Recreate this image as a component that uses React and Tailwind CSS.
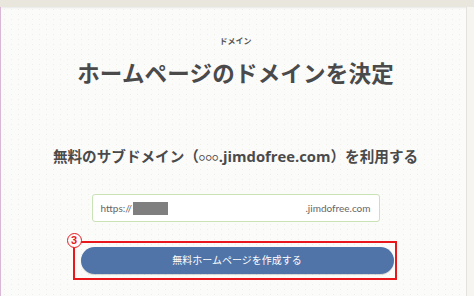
export default function App() {
  const jp = { fontFamily: 'Lato, "Noto Sans CJK JP", sans-serif' }

  return (
    <div
      className="w-[474px] h-[296px] overflow-hidden flex flex-col bg-[#fbfbfa] text-[#4a4a4a]"
      style={jp}
    >
      {/* top strip */}
      <div className="h-[7px] shrink-0 bg-[#e9e6de] shadow-[0_1px_2px_rgba(0,0,0,0.08)]" />

      <div className="flex flex-1 min-h-0">
        <div className="w-px shrink-0 bg-[#d8b8d6]" />

        <main className="flex-1 flex flex-col items-center pl-[4px] bg-[radial-gradient(#f0eee9_0.6px,transparent_0.8px)] bg-[size:7px_5px]">
          <p className="mt-[28px] text-[8px] leading-[12px] font-bold text-[#555]">ドメイン</p>
          <h1 className="mt-[12px] text-[22.5px] leading-[30px] font-bold tracking-[0.2px] text-[#4a4a4a]">
            ホームページのドメインを決定
          </h1>

          <h2 className="mt-[56px] text-[14.6px] leading-[22px] font-bold text-[#4a4a4a]">
            無料のサブドメイン（<span className="text-[10px] align-[1px] font-normal">○○○</span>
            <span className="font-['Open_Sans',sans-serif] text-[14.8px]">.jimdofree.com</span>）を利用する
          </h2>

          <div className="mt-[26px] w-[288px] h-[28px] flex items-center px-[8px] rounded-[3px] border border-[#c9e2b6] bg-white text-[10px] text-[#666]">
            <span>https://</span>
            <span className="ml-[1px] w-[35px] h-[13px] bg-[#7f7f7f]" />
            <span className="ml-auto">.jimdofree.com</span>
          </div>

          <div className="relative mt-[19px] ml-[-2px] w-[324px] h-[39px] border-2 border-[#e8181d] flex items-center pl-[6px]">
            <span className="absolute left-[-8px] top-[-10px] w-[15px] h-[15px] rounded-full border-[1.5px] border-[#e8181d] bg-[#fbfbfa] flex items-center justify-center font-['Liberation_Sans',sans-serif] text-[11px] leading-none font-bold text-[#e8181d]">
              3
            </span>
            <button className="w-[313px] h-[27px] rounded-full bg-[#5073a8] text-white text-[10px] shadow-[0_1px_1px_rgba(0,0,0,0.15)]">
              無料ホームページを作成する
            </button>
          </div>
        </main>

        <div className="w-[8px] shrink-0 border-l border-[#e4e2dc] bg-[#f7f5f0]" />
      </div>
    </div>
  )
}
